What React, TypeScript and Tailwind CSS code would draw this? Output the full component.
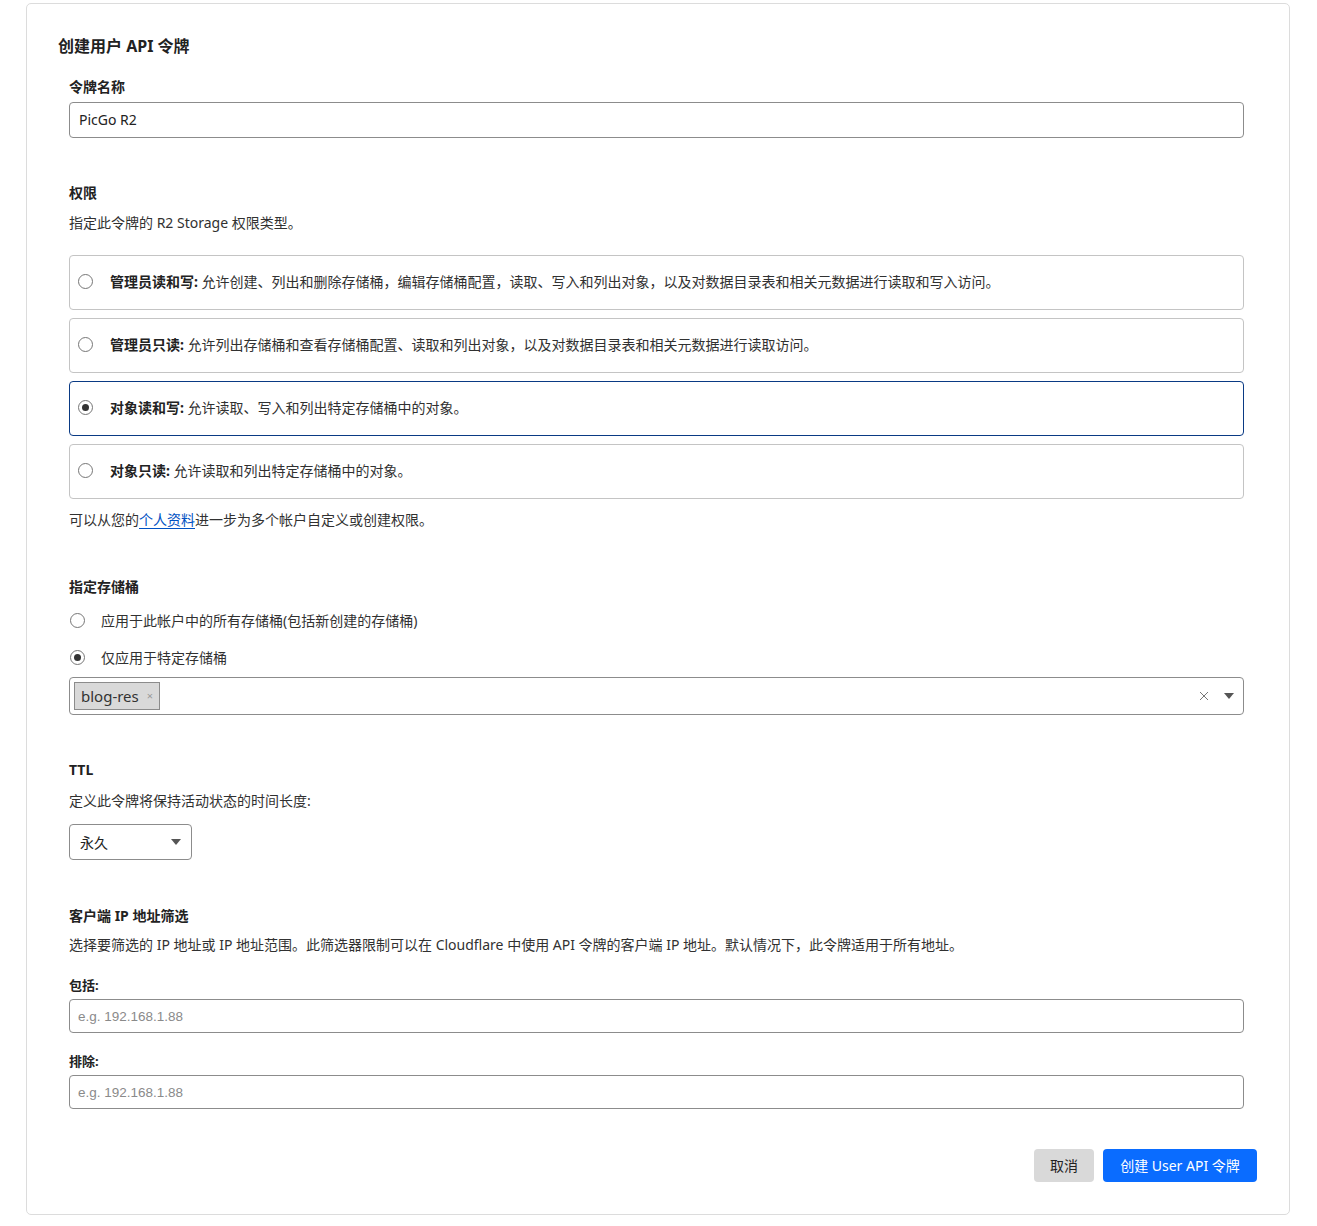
import { useState } from 'react';

const PERMISSIONS = [
  {
    id: 'admin-rw',
    title: '管理员读和写:',
    desc: '允许创建、列出和删除存储桶，编辑存储桶配置，读取、写入和列出对象，以及对数据目录表和相关元数据进行读取和写入访问。',
  },
  {
    id: 'admin-r',
    title: '管理员只读:',
    desc: '允许列出存储桶和查看存储桶配置、读取和列出对象，以及对数据目录表和相关元数据进行读取访问。',
  },
  {
    id: 'object-rw',
    title: '对象读和写:',
    desc: '允许读取、写入和列出特定存储桶中的对象。',
  },
  {
    id: 'object-r',
    title: '对象只读:',
    desc: '允许读取和列出特定存储桶中的对象。',
  },
];

function Radio({ checked }: { checked: boolean }) {
  return (
    <span className="flex h-[15px] w-[15px] shrink-0 items-center justify-center rounded-full border border-[#767676] bg-white">
      {checked && <span className="h-[7px] w-[7px] rounded-full bg-[#333]" />}
    </span>
  );
}

function Caret() {
  return (
    <svg width="10" height="6" viewBox="0 0 10 6" className="shrink-0">
      <path d="M0 0h10L5 6z" fill="#555" />
    </svg>
  );
}

export default function App() {
  const [perm, setPerm] = useState('object-rw');
  const [scope, setScope] = useState<'all' | 'specific'>('specific');

  return (
    <div className="min-h-screen bg-white pl-[26px] pt-[3px] font-['Noto_Sans','Noto_Sans_CJK_SC',sans-serif] text-[#313131]">
      <div className="h-[1212px] w-[1264px] rounded-[5px] border border-[#dcdcdc] pl-[31px] pr-[32px] pt-[30px]">
        <h1 className="text-[16px] font-bold leading-[24px] text-[#222]">
          创建用户 API 令牌
        </h1>

        <div className="ml-[11px] mr-[13px]">
          {/* 令牌名称 */}
          <label className="mt-[19px] block text-[14px] font-bold leading-[20px] text-[#222]">
            令牌名称
          </label>
          <input
            defaultValue="PicGo R2"
            className="mt-[5px] block h-[36px] w-full rounded-[4px] border border-[#8c8c8c] px-[9px] pb-[2px] text-[14px] text-[#222] outline-none"
          />

          {/* 权限 */}
          <div className="mt-[45px] text-[14px] font-bold leading-[20px] text-[#222]">
            权限
          </div>
          <p className="mt-[10px] text-[14px] leading-[20px]">
            指定此令牌的 R2 Storage 权限类型。
          </p>
          <div className="mt-[22px] flex flex-col gap-[8px]">
            {PERMISSIONS.map((p) => (
              <button
                key={p.id}
                onClick={() => setPerm(p.id)}
                className={`flex h-[55px] w-full items-center rounded-[4px] border pb-[2px] pl-[8px] text-left text-[14px] ${
                  perm === p.id ? 'border-[#0a3a84]' : 'border-[#c4c4c4]'
                }`}
              >
                <Radio checked={perm === p.id} />
                <span className="ml-[17px]">
                  <b className="font-bold text-[#222]">{p.title}</b> {p.desc}
                </span>
              </button>
            ))}
          </div>
          <p className="mt-[11px] text-[14px] leading-[20px]">
            可以从您的
            <a className="text-[#0051c3] underline decoration-[#0051c3] underline-offset-[3px]">
              个人资料
            </a>
            进一步为多个帐户自定义或创建权限。
          </p>

          {/* 指定存储桶 */}
          <div className="mt-[47px] text-[14px] font-bold leading-[20px] text-[#222]">
            指定存储桶
          </div>
          <button
            onClick={() => setScope('all')}
            className="mt-[13px] flex h-[20px] items-center pl-[1px] text-[14px]"
          >
            <Radio checked={scope === 'all'} />
            <span className="ml-[16px]">应用于此帐户中的所有存储桶(包括新创建的存储桶)</span>
          </button>
          <button
            onClick={() => setScope('specific')}
            className="mt-[17px] flex h-[20px] items-center pl-[1px] text-[14px]"
          >
            <Radio checked={scope === 'specific'} />
            <span className="ml-[16px]">仅应用于特定存储桶</span>
          </button>
          <div className="mt-[10px] flex h-[38px] w-full items-center rounded-[4px] border border-[#8c8c8c] pl-[4px] pr-[9px]">
            <span className="flex h-[28px] items-center border border-[#8c8c8c] bg-[#d9d9d9] pl-[6px] pr-[6px] text-[15px] text-[#333]">
              blog-res
              <span className="ml-[8px] text-[11px] text-[#999]">×</span>
            </span>
            <span className="flex-1" />
            <svg width="10" height="10" viewBox="0 0 10 10" className="mr-[15px]">
              <path d="M1 1l8 8M9 1l-8 8" stroke="#777" strokeWidth="1" />
            </svg>
            <Caret />
          </div>

          {/* TTL */}
          <div className="mt-[45px] text-[14px] font-bold leading-[20px] text-[#222]">
            TTL
          </div>
          <p className="mt-[11px] text-[14px] leading-[20px]">
            定义此令牌将保持活动状态的时间长度:
          </p>
          <div className="mt-[13px] flex h-[36px] w-[123px] items-center justify-between rounded-[4px] border border-[#8c8c8c] pl-[10px] pr-[10px] text-[14px] text-[#222]">
            永久
            <Caret />
          </div>

          {/* 客户端 IP 地址筛选 */}
          <div className="mt-[46px] text-[14px] font-bold leading-[20px] text-[#222]">
            客户端 IP 地址筛选
          </div>
          <p className="mt-[9px] text-[14px] leading-[20px]">
            选择要筛选的 IP 地址或 IP 地址范围。此筛选器限制可以在 Cloudflare 中使用 API 令牌的客户端 IP 地址。默认情况下，此令牌适用于所有地址。
          </p>
          <label className="mt-[20px] block text-[13px] font-bold leading-[20px] text-[#222]">
            包括:
          </label>
          <input
            placeholder="e.g. 192.168.1.88"
            className="mt-[4px] block h-[34px] w-full rounded-[4px] border border-[#8c8c8c] px-[8px] font-['Liberation_Sans',sans-serif] text-[13.5px] outline-none placeholder:text-[#8a8a8a]"
          />
          <label className="mt-[18px] block text-[13px] font-bold leading-[20px] text-[#222]">
            排除:
          </label>
          <input
            placeholder="e.g. 192.168.1.88"
            className="mt-[4px] block h-[34px] w-full rounded-[4px] border border-[#8c8c8c] px-[8px] font-['Liberation_Sans',sans-serif] text-[13.5px] outline-none placeholder:text-[#8a8a8a]"
          />
        </div>

        <div className="mt-[40px] flex justify-end gap-[9px]">
          <button className="h-[33px] w-[60px] rounded-[4px] bg-[#d9d9d9] text-[14px] text-[#222]">
            取消
          </button>
          <button className="h-[33px] w-[154px] rounded-[4px] bg-[#0a6cff] text-[14px] text-white">
            创建 User API 令牌
          </button>
        </div>
      </div>
    </div>
  );
}
